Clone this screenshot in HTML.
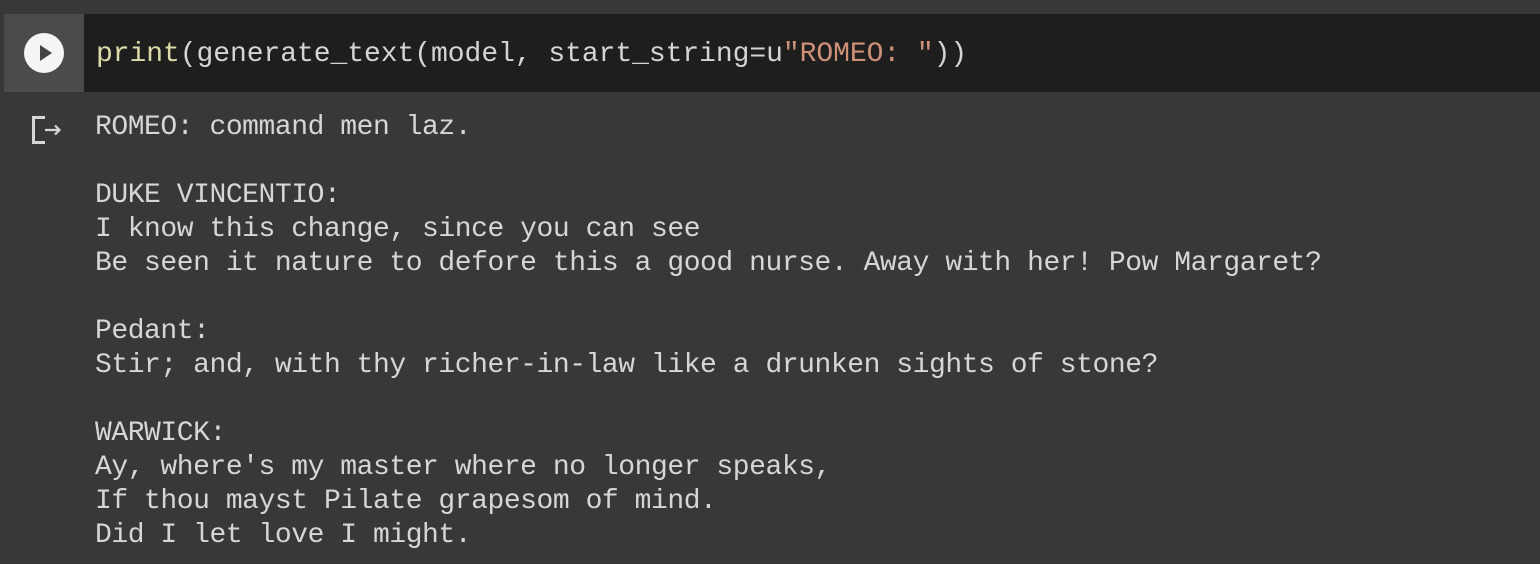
<!DOCTYPE html>
<html><head><style>
html,body{margin:0;padding:0;width:1540px;height:564px;overflow:hidden;background:#383838;}
.cell{position:absolute;left:4px;top:14px;width:1536px;height:78px;background:#1e1e1e;}
.gut{position:absolute;left:4px;top:14px;width:80px;height:78px;background:#4b4b4b;}
.play{position:absolute;left:24px;top:33px;width:40px;height:40px;border-radius:50%;background:#f5f5f5;}
.play:after{content:"";position:absolute;left:16px;top:12px;border-left:12px solid #444;border-top:8px solid transparent;border-bottom:8px solid transparent;}
.code{position:absolute;left:96px;top:38px;font:28px/34px "Liberation Mono",monospace;color:#d4d4d4;white-space:pre;letter-spacing:-0.05px;}
.fn{color:#dcdcaa}.st{color:#ce9178}
.out{position:absolute;left:95px;top:111px;font:28px/34px "Liberation Mono",monospace;color:#d6d6d6;white-space:pre;letter-spacing:-0.45px;margin:0;}
</style></head><body>
<div class="cell"></div><div class="gut"></div><div class="play"></div>
<div class="code"><span class="fn">print</span>(generate_text(model, start_string=u<span class="st">"ROMEO: "</span>))</div>
<svg style="position:absolute;left:32px;top:116px" width="32" height="28"><path d="M13 1.5H1.5V26.5H13" fill="none" stroke="#d6d6d6" stroke-width="3"/><path d="M13 14H27M23 9.5L27.5 14L23 18.5" fill="none" stroke="#d6d6d6" stroke-width="2.2"/></svg>
<pre class="out">ROMEO: command men laz.

DUKE VINCENTIO:
I know this change, since you can see
Be seen it nature to defore this a good nurse. Away with her! Pow Margaret?

Pedant:
Stir; and, with thy richer-in-law like a drunken sights of stone?

WARWICK:
Ay, where's my master where no longer speaks,
If thou mayst Pilate grapesom of mind.
Did I let love I might.</pre>
</body></html>
